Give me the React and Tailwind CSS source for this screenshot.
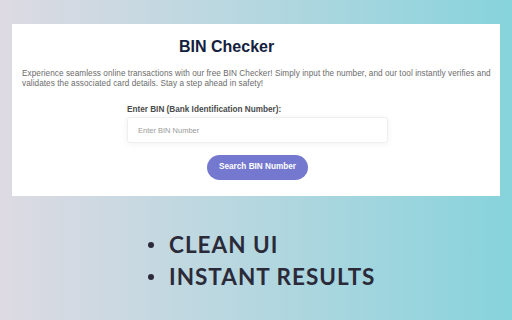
export default function App() {
  return (
    <div className="w-[512px] h-[320px] overflow-hidden bg-gradient-to-r from-[#dddae3] to-[#86d3dc] pt-[24px] px-[12px]" style={{ fontFamily: '"Liberation Sans", Arial, sans-serif' }}>
      <div className="bg-white h-[172px] pt-[13px] pl-[10px] pr-[6px]">
        <h1 className="ml-[157px] text-[16px] font-bold text-[#14213d] leading-[20px]">BIN Checker</h1>
        <p className="mt-[12px] text-[8.2px] leading-[9.5px] text-[#6b6b6b] tracking-[0.06px]">
          Experience seamless online transactions with our free BIN Checker! Simply input the number, and our tool instantly verifies and validates the associated card details. Stay a step ahead in safety!
        </p>
        <div className="ml-[105px] w-[261px] mt-[17px]">
          <label className="block text-[8.2px] font-bold text-[#4a4a4a] leading-[10px]">Enter BIN (Bank Identification Number):</label>
          <input
            className="mt-[2px] w-[261px] h-[26px] border border-[#efefef] rounded-[3px] shadow-[0_1px_6px_rgba(0,0,0,0.06)] px-[10px] text-[7.5px] placeholder:text-[#9a9a9a] outline-none"
            placeholder="Enter BIN Number"
          />
        </div>
        <div className="ml-[185px] mt-[9px]">
          <button className="w-[101px] h-[25px] rounded-full bg-[#7479cf] text-white text-[8.2px] font-bold">Search BIN Number</button>
        </div>
      </div>
      <ul className="ml-[136px] mt-[33px] text-[#2b2a38]" style={{ fontFamily: 'Lato, sans-serif' }}>
        <li className="flex items-center h-[32px] text-[22.5px] font-bold tracking-[1px]">
          <span className="w-[6px] h-[6px] rounded-full bg-[#2b2a38] mr-[15px]"></span>CLEAN UI
        </li>
        <li className="flex items-center h-[32px] text-[22.5px] font-bold tracking-[1px]">
          <span className="w-[6px] h-[6px] rounded-full bg-[#2b2a38] mr-[15px]"></span>INSTANT RESULTS
        </li>
      </ul>
    </div>
  );
}
